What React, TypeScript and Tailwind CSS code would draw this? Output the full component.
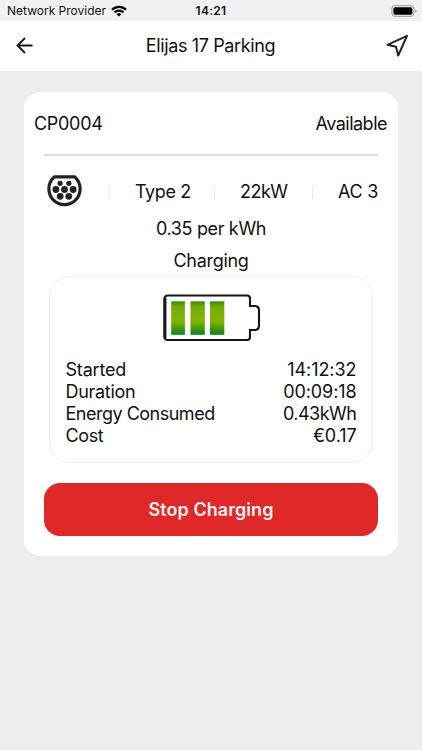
const session = [
  { label: 'Started', value: '14:12:32', labelClass: 'tracking-[-0.2px]', valueClass: 'tracking-[-0.05px]' },
  { label: 'Duration', value: '00:09:18', labelClass: 'tracking-[-0.3px]', valueClass: 'tracking-[-0.1px]' },
  { label: 'Energy Consumed', value: '0.43kWh', labelClass: 'tracking-[-0.5px]', valueClass: 'tracking-[-0.5px]' },
  { label: 'Cost', value: '€0.17', labelClass: 'tracking-[-0.4px]', valueClass: 'tracking-[-0.1px]' },
]

function StatusBar() {
  return (
    <div className="grid h-[21px] grid-cols-3 items-center bg-[#f1f1f1] text-[12px]">
      <div className="flex items-center gap-[5px] pl-[7px]">
        <span className="whitespace-nowrap">Network Provider</span>
        <svg width="16" height="12" viewBox="0 0 16 12" fill="none" stroke="#000" strokeWidth="2.3">
          <path d="M1 4.7a9.9 9.9 0 0 1 14 0" />
          <path d="M3.6 7.4a6.2 6.2 0 0 1 8.8 0" />
          <path d="M8 11.6 5.6 9.3a3.4 3.4 0 0 1 4.8 0z" fill="#000" stroke="none" />
        </svg>
      </div>
      <div className="text-center font-semibold tracking-[0.3px]">14:21</div>
      <div className="flex justify-end pr-[5px]">
        <svg width="26" height="12" viewBox="0 0 26 12">
          <rect x="0.9" y="0.7" width="22" height="10.6" rx="3" fill="none" stroke="#999" />
          <rect x="2.4" y="2.2" width="19" height="7.6" rx="1.7" fill="#000" />
          <path d="M24.3 4v4c1-.5 1.3-1.2 1.3-2s-.3-1.5-1.3-2z" fill="#999" />
        </svg>
      </div>
    </div>
  )
}

function Header() {
  return (
    <div className="flex h-[50px] items-center justify-between bg-white pb-[2px] pl-[16px] pr-[13px]">
      <svg width="18" height="18" viewBox="0 0 18 18" fill="none" stroke="#1b1b1b" strokeWidth="1.9">
        <path d="M16.5 9.5H1.5M9 2 1.5 9.5 9 17" />
      </svg>
      <h1 className="translate-x-[0.5px] text-[18px] tracking-[-0.37px]">Elijas 17 Parking</h1>
      <svg width="23" height="23" viewBox="0 0 23 23" fill="none" stroke="#222" strokeWidth="2" strokeLinejoin="round">
        <path d="M21 1.8 1.5 10.8 10 12.8 12.2 21.5z" />
      </svg>
    </div>
  )
}

function Type2Icon() {
  return (
    <svg width="35" height="32" viewBox="0 0 35 32" fill="#222">
      <path
        d="M7.5 1.8H27.5C31.2 4.8 33.1 9.5 33.1 14C33.1 22.8 26 29.6 17.5 29.6S1.9 22.8 1.9 14C1.9 9.5 3.8 4.8 7.5 1.8z"
        fill="none"
        stroke="#222"
        strokeWidth="3.2"
        strokeLinejoin="round"
      />
      <circle cx="13.1" cy="8.3" r="2.6" />
      <circle cx="21.9" cy="8.3" r="2.6" />
      <circle cx="8.9" cy="14.5" r="3.4" />
      <circle cx="17.5" cy="14.5" r="3.4" />
      <circle cx="26.1" cy="14.5" r="3.4" />
      <circle cx="13.2" cy="21.3" r="3.4" />
      <circle cx="21.8" cy="21.3" r="3.4" />
    </svg>
  )
}

function BatteryIcon() {
  return (
    <svg width="98" height="48" viewBox="0 0 98 48">
      <defs>
        <linearGradient id="cell" x1="0" y1="0" x2="0" y2="1">
          <stop offset="0" stopColor="#348f12" />
          <stop offset="0.18" stopColor="#78ad05" />
          <stop offset="0.6" stopColor="#80b400" />
          <stop offset="0.8" stopColor="#459b0b" />
          <stop offset="1" stopColor="#078520" />
        </linearGradient>
      </defs>
      <path
        d="M5 1.5H84Q87 1.5 87 4.5V12H92.500Q96 12.500 96 16V32Q96 35.500 92.500 36H87V43Q87 46 84 46H5Q1.500 46 1.500 43V4.500Q1.500 1.500 5 1.500z"
        fill="#fff"
        stroke="#161616"
        strokeWidth="2.1"
      />
      <path d="M2 4V44" stroke="#161616" strokeWidth="2.8" />
      <rect x="8.2" y="7.3" width="13.7" height="33.5" fill="url(#cell)" />
      <rect x="27.5" y="7.3" width="14.3" height="33.5" fill="url(#cell)" />
      <rect x="47" y="7.3" width="14.3" height="33.5" fill="url(#cell)" />
    </svg>
  )
}

function Separator() {
  return <div className="h-[13px] w-px bg-[#ececec]" />
}

export default function App() {
  return (
    <div className="h-[750px] w-[422px] overflow-hidden bg-[#ededed] font-['Inter',sans-serif] text-[#111]">
      <StatusBar />
      <Header />
      <div className="mx-[24px] mt-[21px] h-[464px] rounded-[16px] bg-white text-[18px] leading-[22px]">
        <div className="flex justify-between pl-[10px] pr-[11px] pt-[21px]">
          <span className="tracking-[-0.3px]">CP0004</span>
          <span className="tracking-[-0.5px]">Available</span>
        </div>
        <div className="mx-[20px] mt-[19px] h-[1.5px] bg-[#dedede]" />
        <div className="mt-[19.5px] flex h-[34px] items-center pl-[23px] pr-[20px]">
          <div className="pb-[2px]">
            <Type2Icon />
          </div>
          <div className="ml-[27px]">
            <Separator />
          </div>
          <span className="ml-[25px] w-[55px] whitespace-nowrap tracking-[-0.4px]">Type 2</span>
          <div className="ml-[24px]">
            <Separator />
          </div>
          <span className="ml-[25px] w-[48px] whitespace-nowrap tracking-[-0.5px]">22kW</span>
          <div className="ml-[24px]">
            <Separator />
          </div>
          <span className="ml-auto tracking-[-0.3px]">AC 3</span>
        </div>
        <p className="mt-[9px] text-center tracking-[-0.35px]">0.35 per kWh</p>
        <p className="mt-[10px] text-center tracking-[-0.3px]">Charging</p>
        <div className="mx-[25px] mt-[4px] h-[187px] rounded-[21px] border border-[#eeeeee] px-[15.5px] pt-[17px]">
          <div className="flex justify-center pl-[2px]">
            <BatteryIcon />
          </div>
          <div className="mt-[17px]">
            {session.map((row) => (
              <div key={row.label} className="flex justify-between">
                <span className={row.labelClass}>{row.label}</span>
                <span className={row.valueClass}>{row.value}</span>
              </div>
            ))}
          </div>
        </div>
        <button className="mx-[20px] mt-[20px] h-[53px] w-[334px] rounded-[16px] bg-[#e02829] font-semibold tracking-[0.05px] text-[#fff3f0]">
          Stop Charging
        </button>
      </div>
    </div>
  )
}
